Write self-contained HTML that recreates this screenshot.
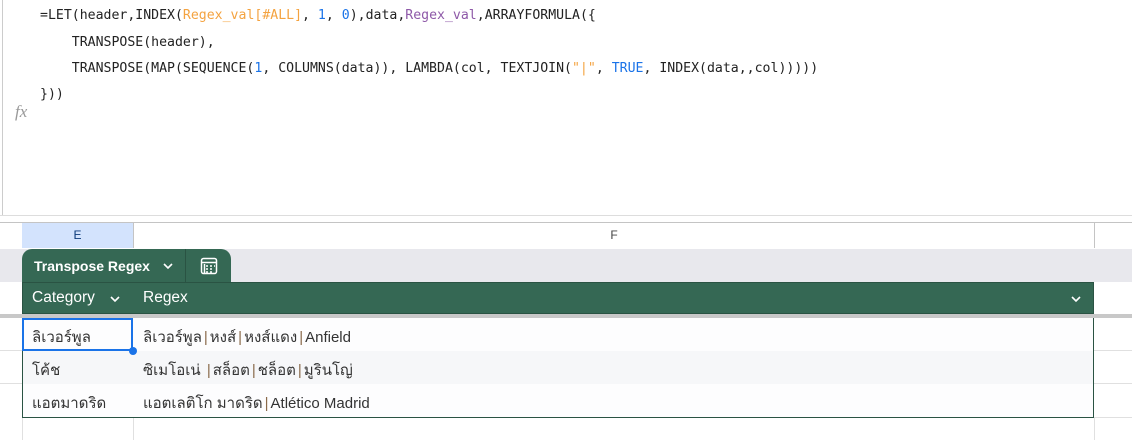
<!DOCTYPE html><html><head><style>
body{margin:0;width:1132px;height:440px;overflow:hidden;background:#fff;font-family:"Liberation Sans","Noto Sans CJK SC",sans-serif;position:relative}
.a{position:absolute}
.code{font-family:"DejaVu Sans Mono","Liberation Mono",monospace;font-size:13.2px;color:#222;left:40px;white-space:pre}
.o{color:#f4a340}.p{color:#8e59a8}.b{color:#1a73e8}
.cell{font-size:15px;color:#333;white-space:pre}
.pp{color:#8a6a4a;margin:0 2px}
</style></head><body>
<div class="a" style="left:2px;top:0;width:1px;height:215px;background:#ccc"></div>
<div class="a code" style="top:8px">=LET(header,INDEX(<span class="o">Regex_val[#ALL]</span>, <span class="b">1</span>, <span class="b">0</span>),data,<span class="p">Regex_val</span>,ARRAYFORMULA({</div>
<div class="a code" style="top:35px">    TRANSPOSE(header),</div>
<div class="a code" style="top:61px">    TRANSPOSE(MAP(SEQUENCE(<span class="b">1</span>, COLUMNS(data)), LAMBDA(col, TEXTJOIN(<span class="o">"|"</span>, <span class="b">TRUE</span>, INDEX(data,,col)))))</div>
<div class="a code" style="top:87px">})) </div>
<div class="a" style="left:15px;top:102px;font-family:'Liberation Serif',serif;font-style:italic;font-size:17px;color:#999">fx</div>
<div class="a" style="left:0;top:215px;width:1132px;height:7px;background:#fff;border-top:1px solid #ddd"></div>
<div class="a" style="left:0;top:222px;width:1132px;height:26px;border-top:1px solid #c4c4c4;border-bottom:1px solid #c4c4c4;background:#fff"></div>
<div class="a" style="left:22px;top:223px;width:111px;height:25px;background:#d3e3fd;text-align:center;line-height:25px;font-size:12px;color:#0b3a7a">E</div>
<div class="a" style="left:133px;top:223px;width:1px;height:25px;background:#c4c4c4"></div>
<div class="a" style="left:134px;top:223px;width:960px;height:25px;text-align:center;line-height:25px;font-size:12px;color:#444">F</div>
<div class="a" style="left:1094px;top:223px;width:1px;height:25px;background:#c4c4c4"></div>
<div class="a" style="left:0;top:249px;width:1132px;height:33px;background:#e8e8ed"></div>
<div class="a" style="left:22px;top:249px;width:209px;height:34px;background:#356854;border-radius:10px 10px 0 0"></div>
<div class="a" style="left:185px;top:249px;width:1px;height:33px;background:#2a5343"></div>
<div class="a" style="left:34px;top:258px;color:#fff;font-size:14px;font-weight:bold">Transpose Regex</div>
<svg class="a" style="left:162px;top:262px" width="12" height="8"><path d="M2 2l4 4 4-4" stroke="#fff" stroke-width="1.6" fill="none"/></svg>
<svg class="a" style="left:200px;top:257px" width="18" height="18"><rect x="1.5" y="1.5" width="15" height="15" rx="2" stroke="#fff" stroke-width="1.5" fill="none"/><path d="M1.5 5.5h15M6 9h2M10 9h2M14 9h1M6 12h2M10 12h2M6 15h2M10 15h2M4.5 7v9" stroke="#fff" stroke-width="1.5"/></svg>
<div class="a" style="left:22px;top:282px;width:1072px;height:32px;background:#356854;border:1px solid #2a5343;box-sizing:border-box"></div>
<div class="a" style="left:32px;top:289px;color:#fff;font-size:15.5px">Category</div>
<svg class="a" style="left:109px;top:295px" width="12" height="8"><path d="M2 2l4 4 4-4" stroke="#fff" stroke-width="1.6" fill="none"/></svg>
<div class="a" style="left:143px;top:289px;color:#fff;font-size:15.5px">Regex</div>
<svg class="a" style="left:1070px;top:295px" width="12" height="8"><path d="M2 2l4 4 4-4" stroke="#fff" stroke-width="1.6" fill="none"/></svg>
<div class="a" style="left:0;top:314px;width:1132px;height:4px;background:#c8c8c8"></div>
<div class="a" style="left:1094px;top:318px;width:38px;height:122px;background:#fff"></div>
<div class="a" style="left:1094px;top:350px;width:38px;height:1px;background:#e0e0e0"></div>
<div class="a" style="left:1094px;top:383px;width:38px;height:1px;background:#e0e0e0"></div>
<div class="a" style="left:1094px;top:417px;width:38px;height:1px;background:#e0e0e0"></div>
<div class="a" style="left:1094px;top:418px;width:1px;height:22px;background:#e0e0e0"></div>
<div class="a" style="left:0;top:350px;width:22px;height:1px;background:#e0e0e0"></div>
<div class="a" style="left:0;top:383px;width:22px;height:1px;background:#e0e0e0"></div>
<div class="a" style="left:22px;top:418px;width:1px;height:22px;background:#e0e0e0"></div>
<div class="a" style="left:133px;top:418px;width:1px;height:22px;background:#e0e0e0"></div>
<div class="a" style="left:22px;top:318px;width:1072px;height:100px;border:1px solid #2a5343;border-top:none;box-sizing:border-box;background:#fdfdfe"></div>
<div class="a" style="left:23px;top:351px;width:1070px;height:33px;background:#f6f7f9"></div>
<div class="a" style="left:22px;top:318px;width:111px;height:33px;border:2px solid #1a73e8;box-sizing:border-box"></div>
<div class="a" style="left:129px;top:347px;width:8px;height:8px;border-radius:50%;background:#1a73e8"></div>
<div class="a cell" style="left:32px;top:325px">ลิเวอร์พูล</div>
<div class="a cell" style="left:143px;top:325px">ลิเวอร์พูล<span class="pp">|</span>หงส์<span class="pp">|</span>หงส์แดง<span class="pp">|</span>Anfield</div>
<div class="a cell" style="left:32px;top:358px">โค้ช</div>
<div class="a cell" style="left:143px;top:358px">ซิเมโอเน่ <span class="pp">|</span>สล็อต<span class="pp">|</span>ชล็อต<span class="pp">|</span>มูรินโญ่</div>
<div class="a cell" style="left:32px;top:391px">แอตมาดริด</div>
<div class="a cell" style="left:143px;top:391px">แอตเลติโก มาดริด<span class="pp">|</span>Atlético Madrid</div>
</body></html>
